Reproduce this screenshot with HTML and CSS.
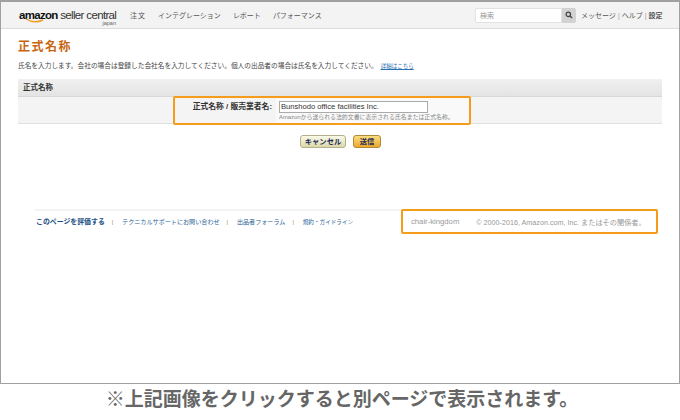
FILE: index.html
```html
<!DOCTYPE html>
<html lang="ja">
<head>
  <meta charset="UTF-8" />
  <title>正式名称</title>
  <link rel="stylesheet" href="styles.css">
</head>
<body>
  <div class="shot">
    <div class="topbar">
      <div class="logo">
        <div class="logo-main"><b>amazon</b> seller central</div>
        <svg class="logo-smile" width="20" height="6" viewBox="0 0 20 6"><path d="M1 1 Q9 6 18 2" fill="none" stroke="#f59a23" stroke-width="1.4"/></svg>
        <div class="logo-sub">japan</div>
      </div>
      <div class="nav">
        <span>注文</span>
        <span>インテグレーション</span>
        <span>レポート</span>
        <span>パフォーマンス</span>
      </div>
      <div class="search">
        <div class="search-input">検索</div>
        <div class="search-btn">
          <svg width="8" height="8" viewBox="0 0 9 9"><circle cx="3.7" cy="3.7" r="2.5" fill="none" stroke="#444" stroke-width="1.4"/><path d="M5.5 5.5 L8 8" stroke="#444" stroke-width="1.6"/></svg>
        </div>
      </div>
      <div class="toplinks">メッセージ<i>|</i>ヘルプ<i>|</i><span class="bold">設定</span></div>
    </div>

    <div class="content">
      <h1>正式名称</h1>
      <p class="intro">氏名を入力します。会社の場合は登録した会社名を入力してください。個人の出品者の場合は氏名を入力してください。<a href="#">詳細はこちら</a></p>

      <div class="panel">
        <div class="panel-head">正式名称</div>
        <div class="panel-row">
          <div class="mark">
            <div class="field-label">正式名称 / 販売業者名:</div>
            <div class="field">
              <div class="field-input">Bunshodo office facilities Inc.</div>
              <div class="field-note">Amazonから送られる法的文書に表示される氏名または正式名称。</div>
            </div>
          </div>
        </div>
      </div>

      <div class="buttons">
        <button class="btn">キャンセル</button>
        <button class="btn btn-send">送信</button>
      </div>

      <div class="footer">
        <div class="footer-links">
          <a href="#" class="strong">このページを評価する</a><i>|</i>
          <a href="#">テクニカルサポートにお問い合わせ</a><i>|</i>
          <a href="#">出品者フォーラム</a><i>|</i>
          <a href="#" class="terms">規約・ガイドライン</a>
        </div>
        <div class="footer-right">
          <span class="seller">chair-kingdom</span>
          <span>© 2000-2016, Amazon.com, Inc. またはその関係者。</span>
        </div>
      </div>
    </div>
  </div>
  <div class="caption">※上記画像をクリックすると別ページで表示されます。</div>
</body>
</html>
```

FILE: styles.css
```css
* {
  margin: 0; padding: 0; box-sizing: border-box;
}
body {
  width: 680px;
  height: 420px;
  overflow: hidden;
  background: #fff;
  color: #333;
  font-family: "Liberation Sans", "Noto Sans CJK JP", sans-serif;
}
.shot {
  height: 384px;
  border: 1px solid #a0a0a0;
  border-top-width: 2px;
}
.topbar {
  height: 27px;
  background: #f3f3f3;
  border-bottom: 1px solid #dcdcdc;
  display: flex;
  align-items: center;
  padding-left: 18px;
}
.logo {
  width: 98px;
  height: 24px;
  position: relative;
}
.logo-main {
  margin-top: 5px;
  font-size: 11.5px;
  line-height: 14px;
  letter-spacing: -0.65px;
  white-space: nowrap;
  color: #333;
  font-family: "Liberation Sans", sans-serif;
}
.logo-main b {
  color: #111;
  font-size: 11.5px;
  letter-spacing: -0.7px;
}
.logo-smile {
  position: absolute;
  left: 6px;
  top: 15px;
}
.logo-sub {
  position: absolute;
  right: 1px;
  top: 16px;
  font-size: 5.5px;
  line-height: 8px;
  color: #666;
}
.nav {
  display: flex;
  gap: 12px;
  margin-left: 13px;
  font-size: 7px;
  color: #555;
}
.nav span:first-child {
  letter-spacing: 1px;
}
.search {
  display: flex;
  margin-left: auto;
  height: 15px;
}
.search-input {
  width: 87px;
  background: #fff;
  border: 1px solid #e2e2e2;
  border-radius: 2px 0 0 2px;
  font-size: 7px;
  line-height: 13px;
  padding-left: 4px;
  color: #999;
}
.search-btn {
  width: 14px;
  background: #d2d2d2;
  border-radius: 0 2px 2px 0;
  display: flex;
  align-items: center;
  justify-content: center;
}
.toplinks {
  width: 98px;
  margin-left: 5px;
  font-size: 7px;
  color: #555;
  white-space: nowrap;
}
.toplinks i {
  font-style: normal;
  color: #999;
  margin: 0 2px;
}
.toplinks .bold {
  font-weight: bold;
}
.content {
  padding: 10px 16px 0 17px;
}
h1 {
  font-size: 12px;
  line-height: 16px;
  letter-spacing: 1.5px;
  font-weight: bold;
  color: #c8660f;
}
.intro {
  margin-top: 5px;
  font-size: 6.7px;
  line-height: 12px;
  color: #444;
  white-space: nowrap;
}
.intro a {
  margin-left: 3px;
  font-size: 5.5px;
  color: #2a6fb0;
  text-decoration: underline;
}
.panel {
  margin-top: 7px;
  width: 644px;
  border-bottom: 1px solid #e0e0e0;
}
.panel-head {
  height: 18px;
  background: linear-gradient(to bottom, #f0f0f0, #e4e4e4);
  border-bottom: 1px solid #d8d8d8;
  padding-left: 5px;
  font-size: 7.5px;
  line-height: 17px;
  font-weight: bold;
  color: #333;
}
.panel-row {
  height: 26px;
  background: #f4f4f4;
  padding-left: 155px;
  padding-top: 1px;
}
.mark {
  width: 298px;
  height: 29px;
  margin-top: -2px;
  border: 2px solid #f59c1a;
  border-radius: 2px;
  display: flex;
  position: relative;
}
.field-label {
  width: 97px;
  padding-top: 3px;
  text-align: right;
  font-size: 7.8px;
  line-height: 11px;
  font-weight: bold;
  color: #333;
  white-space: nowrap;
}
.field {
  margin-left: 4px;
  padding: 3px 0 0 3px;
  flex: 1;
  background: #f9f9f9;
}
.field-input {
  width: 149px;
  height: 12px;
  background: #fff;
  border: 1px solid #aaa;
  font-size: 7.6px;
  line-height: 10px;
  padding-left: 1px;
  color: #333;
  white-space: nowrap;
}
.field-note {
  font-size: 5.9px;
  line-height: 8px;
  color: #888;
  white-space: nowrap;
}
.buttons {
  margin-top: 11px;
  display: flex;
  justify-content: center;
  gap: 7px;
}
.btn {
  height: 13px;
  width: 46px;
  border: 1px solid #b5b08c;
  border-radius: 3px;
  background: linear-gradient(to bottom, #fafae8, #dcd8a8);
  font-family: inherit;
  font-size: 7.3px;
  line-height: 10px;
  font-weight: bold;
  color: #1c2a5a;
}
.btn-send {
  width: 28px;
  border-color: #b08a3a;
  background: linear-gradient(to bottom, #fbdc80, #eda92a);
}
.footer {
  margin-top: 61px;
  margin-left: 17px;
  width: 623px;
  display: flex;
  justify-content: space-between;
  border-top: 2px solid #f3f3f3;
  height: 25px;
}
.footer-links {
  padding: 5px 0 0 1px;
  font-size: 6.1px;
  line-height: 12px;
  white-space: nowrap;
}
.footer-links a {
  color: #2a5f96;
  text-decoration: none;
}
.footer-links a.strong {
  color: #1c4f86;
  font-size: 6.9px;
  font-weight: bold;
}
.footer-links a.terms {
  font-size: 5.6px;
}
.footer-links i {
  font-style: normal;
  color: #a08a60;
  margin: 0 7px;
}
.footer-right {
  width: 257px;
  height: 25px;
  margin-top: -2px;
  border: 2px solid #f59c1a;
  border-radius: 2px;
  display: flex;
  align-items: center;
  gap: 17px;
  padding-left: 8px;
  font-size: 7.2px;
  color: #999;
  white-space: nowrap;
}
.footer-right .seller {
  font-size: 7.7px;
}
.caption {
  text-align: center;
  margin-top: 4px;
  padding-left: 4px;
  font-size: 19px;
  line-height: 24px;
  font-weight: bold;
  color: #666;
}
```
